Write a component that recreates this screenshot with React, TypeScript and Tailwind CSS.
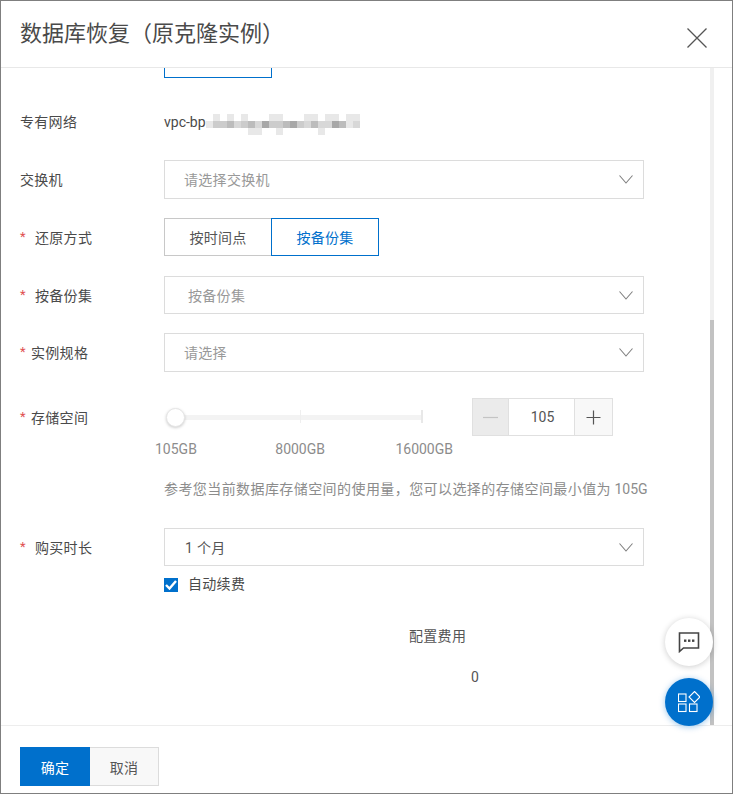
import React from "react";

const FONT = "font-['Roboto','Noto_Sans_CJK_SC',sans-serif]";

const blur = [
  "0101010001100011011011",
  "1334234253345324225412",
  "0000001100100000100000",
];
const shade: Record<string, string> = {
  "0": "#ffffff",
  "1": "#e8e8e8",
  "2": "#d8d8d8",
  "3": "#cccccc",
  "4": "#bcbcbc",
  "5": "#a8a8a8",
};

function Chevron() {
  return (
    <svg width="14" height="9" viewBox="0 0 14 9" fill="none" className="shrink-0">
      <path d="M0.5 0.5 L7 8 L13.5 0.5" stroke="#808080" strokeWidth="1.1" />
    </svg>
  );
}

function Label({ text, required, gap }: { text: string; required?: boolean; gap?: string }) {
  return (
    <div className="w-[144px] shrink-0 flex items-center text-[14px] text-[#4a4a4a] tracking-[0.3px] pt-[2px]">
      {required && <span className="text-[#e05050] text-[13px] leading-none w-[5px] -mt-1">*</span>}
      <span className={gap ?? ""}>{text}</span>
    </div>
  );
}

function Select({ text, pad, dark, h }: { text: string; pad: string; dark?: boolean; h: string }) {
  return (
    <div className={`w-[480px] ${h} border border-[#dcdcdc] flex items-center justify-between pr-[10px] ${pad}`}>
      <span className={`text-[14px] tracking-[0.3px] pt-[2px] ${dark ? "text-[#555]" : "text-[#999]"}`}>{text}</span>
      <Chevron />
    </div>
  );
}

export default function App() {
  return (
    <div className={`w-[733px] h-[794px] bg-white border border-[#7f7f7f] flex flex-col overflow-hidden relative ${FONT}`}>
      <header className="h-[66px] shrink-0 flex items-center justify-between pl-[19px] pr-[25px] border-b border-[#e8e8e8] box-content -mb-px">
        <h1 className="text-[22px] font-normal text-[#4a4a4a] leading-none -mt-[1px]">数据库恢复（原克隆实例）</h1>
        <svg width="20" height="20" viewBox="0 0 20 20" fill="none" className="mt-[8px]">
          <path d="M0.5 0.5 L19.5 19.5 M19.5 0.5 L0.5 19.5" stroke="#555" strokeWidth="1.3" />
        </svg>
      </header>

      <main className="flex-1 flex min-h-0 mt-px">
        <div className="w-[709px] shrink-0 pl-[19px] flex flex-col">
          <div className="ml-[144px] w-[108px] h-[10px] border-x border-b border-[#0070cc]" />

          <div className="flex items-center h-[20px] mt-[34px]">
            <div className="-mt-[2px]">
              <Label text="专有网络" />
            </div>
            <div className="flex items-center">
              <span className="text-[14px] text-[#4a4a4a]">vpc-bp</span>
              <div className="flex flex-col mt-[4px]">
                {blur.map((row, i) => (
                  <div key={i} className="flex">
                    {row.split("").map((c, j) => (
                      <div key={j} className="w-[7px] h-[7px]" style={{ backgroundColor: shade[c] }} />
                    ))}
                  </div>
                ))}
              </div>
            </div>
          </div>

          <div className="flex items-center mt-[28px]">
            <Label text="交换机" />
            <Select text="请选择交换机" pad="pl-[19px]" h="h-[39px]" />
          </div>

          <div className="flex items-center mt-[19px]">
            <Label text="还原方式" required gap="ml-[10px]" />
            <div className="flex h-[38px] text-[14px] tracking-[0.3px]">
              <div className="w-[107px] pt-[2px] border border-[#c8c8c8] border-r-0 flex items-center justify-center text-[#555]">按时间点</div>
              <div className="w-[108px] pt-[2px] border border-[#0070cc] flex items-center justify-center text-[#0070cc]">按备份集</div>
            </div>
          </div>

          <div className="flex items-center mt-[20px]">
            <Label text="按备份集" required gap="ml-[10px]" />
            <Select text="按备份集" pad="pl-[23px]" h="h-[38px]" />
          </div>

          <div className="flex items-center mt-[19px]">
            <Label text="实例规格" required gap="ml-[6px]" />
            <Select text="请选择" pad="pl-[19px]" h="h-[39px]" />
          </div>

          <div className="flex items-start mt-[26px]">
            <div className="h-[38px] flex items-center">
              <Label text="存储空间" required gap="ml-[6px]" />
            </div>
            <div className="w-[308px] shrink-0">
              <div className="h-[38px] relative">
                <div className="absolute left-[4px] top-[17px] w-[255px] h-[5px] bg-[#f3f3f3]" />
                <div className="absolute left-[136px] top-[12px] w-px h-[13px] bg-[#efefef]" />
                <div className="absolute left-[257px] top-[12px] w-[2px] h-[13px] bg-[#e8e8e8]" />
                <div className="absolute left-[2px] top-[10px] w-[19px] h-[19px] rounded-full bg-white border border-[#e6e6e6] shadow-[0_1px_3px_rgba(0,0,0,0.2)]" />
              </div>
            </div>
            <div className="flex h-[38px] w-[141px] border border-[#e0e0e0]">
              <div className="w-[36px] bg-[#ebebeb] flex items-center justify-center border-r border-[#e0e0e0]">
                <svg width="15" height="15" viewBox="0 0 15 15"><path d="M0 7.5 H15" stroke="#c4c4c4" strokeWidth="1.2" /></svg>
              </div>
              <div className="flex-1 flex items-center justify-center pl-[2px] text-[14px] text-[#555]">105</div>
              <div className="w-[38px] bg-[#f8f8f8] border-l border-[#e0e0e0] flex items-center justify-center">
                <svg width="15" height="15" viewBox="0 0 15 15"><path d="M0.5 7.5 H14.5 M7.5 0.5 V14.5" stroke="#555" strokeWidth="1.2" /></svg>
              </div>
            </div>
          </div>

          <div className="ml-[135px] w-[298px] flex justify-between text-[14px] text-[#8c8c8c] mt-[3px] leading-[20px]">
            <span>105GB</span>
            <span className="ml-[8px]">8000GB</span>
            <span>16000GB</span>
          </div>

          <p className="ml-[144px] text-[14px] text-[#8c8c8c] mt-[20px] leading-[20px] whitespace-nowrap">
            <span className="tracking-[0.42px]">参考您当前数据库存储空间的使用量，您可以选择的存储空间最小值为</span> 105G
          </p>

          <div className="flex items-center mt-[29px]">
            <Label text="购买时长" required gap="ml-[10px]" />
            <Select text="1 个月" pad="pl-[20px]" dark h="h-[38px]" />
          </div>

          <div className="flex items-center ml-[144px] mt-[11px] h-[15px]">
            <div className="w-[14px] h-[14px] bg-[#0070cc] flex items-center justify-center">
              <svg width="12" height="10" viewBox="0 0 12 10" fill="none">
                <path d="M1 5 L4.5 8.5 L11 1" stroke="#fff" strokeWidth="2.4" />
              </svg>
            </div>
            <span className="ml-[10px] text-[14px] tracking-[0.3px] text-[#4a4a4a]">自动续费</span>
          </div>

          <div className="ml-[389px] mt-[34px] text-[14px] tracking-[0.3px] leading-[20px] text-[#555]">配置费用</div>
          <div className="ml-[451px] mt-[21px] text-[14px] leading-[20px] text-[#555]">0</div>
        </div>

        <div className="w-[4px] shrink-0 bg-[#f0f0f0] flex flex-col justify-end">
          <div className="h-[405px] bg-[#c2c2c2]" />
        </div>
      </main>

      <footer className="h-[68px] shrink-0 border-t border-[#ededed] pl-[19px] pt-[21px] flex items-start">
        <button className="w-[70px] h-[39px] pt-[3px] bg-[#0070cc] text-white text-[14px] tracking-[0.3px]">确定</button>
        <button className="w-[69px] h-[39px] pt-[3px] bg-[#f8f8f8] border border-[#dcdcdc] border-l-0 text-[#555] text-[14px] tracking-[0.3px]">取消</button>
      </footer>

      <div className="absolute left-[664px] top-[617px] w-[48px] h-[48px] rounded-full bg-white shadow-[0_1px_6px_rgba(0,0,0,0.2)] flex items-center justify-center">
        <svg width="22" height="22" viewBox="0 0 22 22" fill="none">
          <path d="M1.5 2 H20.5 V17 H5.5 L1.5 20.5 Z" stroke="#444" strokeWidth="1.6" />
          <rect x="6" y="8.5" width="2.4" height="2.4" fill="#444" />
          <rect x="10" y="8.5" width="2.4" height="2.4" fill="#444" />
          <rect x="14" y="8.5" width="2.4" height="2.4" fill="#444" />
        </svg>
      </div>
      <div className="absolute left-[664px] top-[677px] w-[48px] h-[48px] rounded-full bg-[#0070cc] shadow-[0_1px_6px_rgba(0,112,204,0.4)] flex items-center justify-center">
        <svg width="22" height="22" viewBox="0 0 22 22" fill="none" stroke="#fff" strokeWidth="1.1">
          <rect x="0.5" y="3" width="7.5" height="7.5" />
          <rect x="0.5" y="13" width="7.5" height="7.5" />
          <rect x="11.5" y="13" width="7.5" height="7.5" />
          <path d="M16.5 0.5 L22 6 L16.5 11.5 L11 6 Z" />
        </svg>
      </div>
    </div>
  );
}
